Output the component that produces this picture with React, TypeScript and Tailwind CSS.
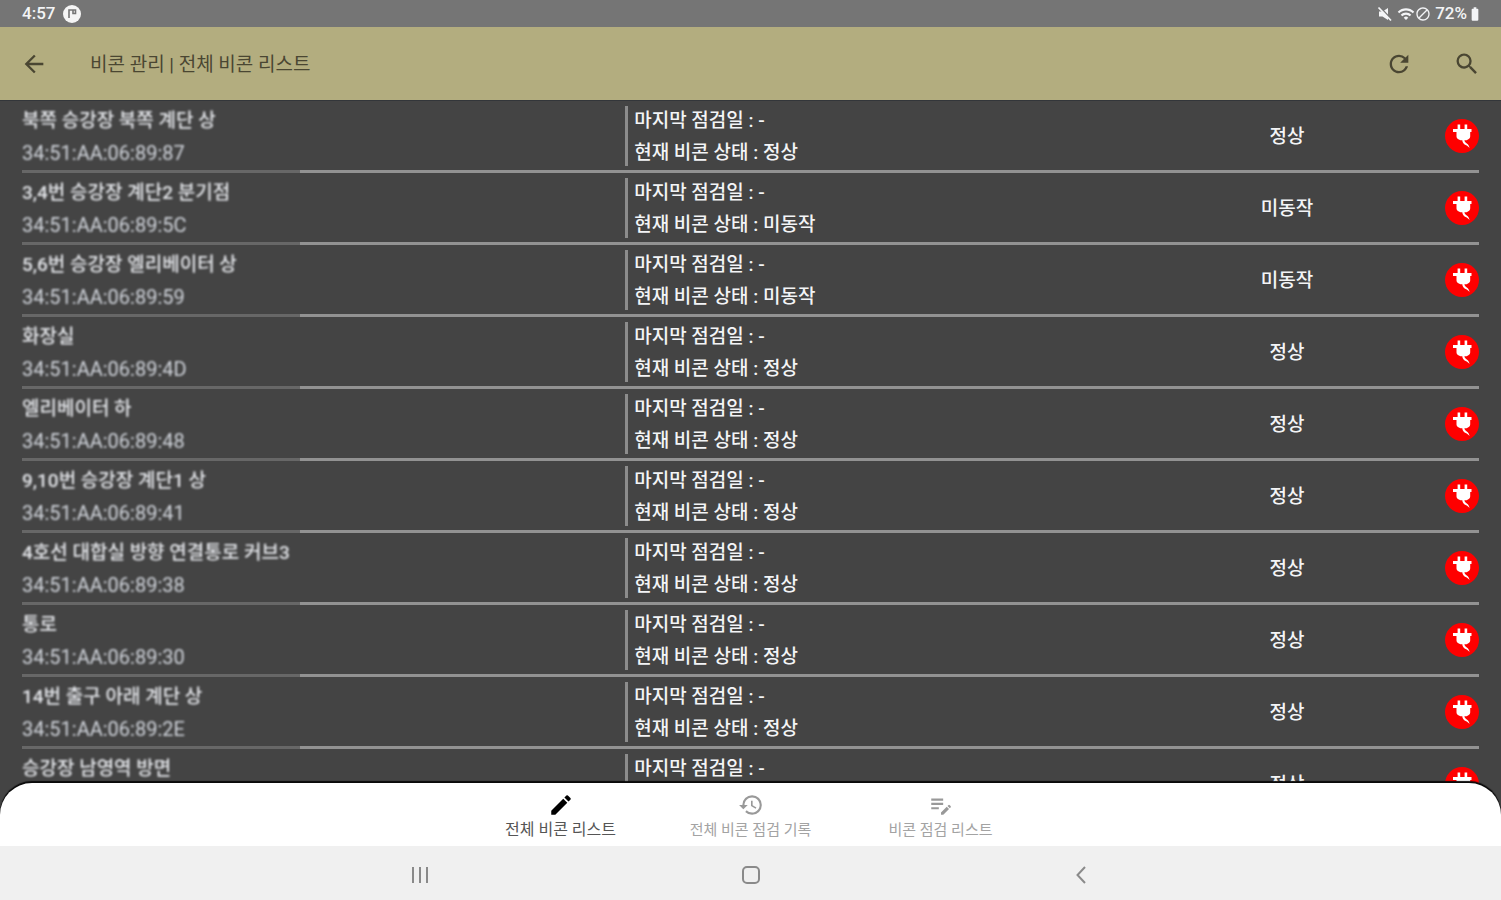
import { useState } from 'react'
import {
  MdArrowBack,
  MdBatteryFull,
  MdBlock,
  MdCreate,
  MdEditNote,
  MdHistory,
  MdRefresh,
  MdSearch,
  MdWifi,
} from 'react-icons/md'

interface Beacon {
  name: string
  mac: string
  status: string
}

const beacons: Beacon[] = [
  { name: '북쪽 승강장 북쪽 계단 상', mac: '34:51:AA:06:89:87', status: '정상' },
  { name: '3,4번 승강장 계단2 분기점', mac: '34:51:AA:06:89:5C', status: '미동작' },
  { name: '5,6번 승강장 엘리베이터 상', mac: '34:51:AA:06:89:59', status: '미동작' },
  { name: '화장실', mac: '34:51:AA:06:89:4D', status: '정상' },
  { name: '엘리베이터 하', mac: '34:51:AA:06:89:48', status: '정상' },
  { name: '9,10번 승강장 계단1 상', mac: '34:51:AA:06:89:41', status: '정상' },
  { name: '4호선 대합실 방향 연결통로 커브3', mac: '34:51:AA:06:89:38', status: '정상' },
  { name: '통로', mac: '34:51:AA:06:89:30', status: '정상' },
  { name: '14번 출구 아래 계단 상', mac: '34:51:AA:06:89:2E', status: '정상' },
  { name: '승강장 남영역 방면', mac: '34:51:AA:06:89:2B', status: '정상' },
]

const tabs = [
  { label: '전체 비콘 리스트', icon: MdCreate },
  { label: '전체 비콘 점검 기록', icon: MdHistory },
  { label: '비콘 점검 리스트', icon: MdEditNote },
]

function PlugIcon() {
  return (
    <svg viewBox="0 0 34 34" className="h-[34px] w-[34px]" aria-hidden="true">
      <circle cx="17" cy="17" r="17" fill="#fe0000" />
      <path d="M12.600 5.500h2.600V10h4.400V5.500h2.600V10h4.300v3h-1.300v4.600c0 1.800-1.600 3.200-3.600 3.600h-2.200c.2 1.400 1 2.200 2.400 3.200 1.400 1 2.300 2.300 2.700 4.600-1.200-1.400-2.300-2.200-3.900-3-2-1-3.200-2.600-3.300-4.800h-1.800c-2.400-.4-4-1.800-4-3.600V13H8v-3h4.600z" fill="#fff" />
    </svg>
  )
}

function MutedIcon() {
  return (
    <svg viewBox="0 0 16 16" className="mr-1 h-4 w-4" aria-hidden="true">
      <path d="M2 5.500h3.500L11 2v12l-5.500-3.500H2z" fill="currentColor" />
      <path d="M3 1l12 13" stroke="#757575" strokeWidth="1.500" />
      <path d="M1.500 1.500l12.500 13" stroke="currentColor" strokeWidth="1.800" />
    </svg>
  )
}

function StatusBar() {
  return (
    <div className="flex h-[27px] shrink-0 items-center justify-between bg-[#757575] px-[22px] pt-px text-[17px] font-medium text-gray-100">
      <div className="flex items-center gap-2">
        <span>4:57</span>
        <svg viewBox="0 0 18 18" className="h-[18px] w-[18px]" aria-hidden="true">
          <circle cx="9" cy="9" r="9" fill="#f5f5f5" />
          <path d="M6 13V5h3.500M10 5h2.500v3.500H10z" fill="none" stroke="#757575" strokeWidth="1.600" />
        </svg>
      </div>
      <div className="flex items-center">
        <MutedIcon />
        <MdWifi className="h-[18px] w-[18px]" />
        <MdBlock className="mr-1 h-4 w-4" />
        <span>72%</span>
        <MdBatteryFull className="-mr-1 h-4 w-4" />
      </div>
    </div>
  )
}

function Header() {
  return (
    <header className="flex h-[74px] shrink-0 items-center border-b border-[#33363a] bg-[#b3ad7f] px-[22px] text-[#4a4632]">
      <button type="button" aria-label="뒤로">
        <MdArrowBack className="-ml-0.5 h-7 w-7" />
      </button>
      <h1 className="ml-[42px] flex-1 pt-[3px] text-[19px]">비콘 관리 | 전체 비콘 리스트</h1>
      <div className="flex items-center gap-10">
        <button type="button" aria-label="새로고침">
          <MdRefresh className="h-7 w-7" />
        </button>
        <button type="button" aria-label="검색">
          <MdSearch className="-mr-0.5 h-7 w-7" />
        </button>
      </div>
    </header>
  )
}

function BeaconRow({ beacon }: { beacon: Beacon }) {
  return (
    <li>
      <div className="flex h-[69px] items-center text-[19px] leading-8">
        {/* name and address are masked */}
        <div className="w-[41.4%] pt-[2px] text-gray-200 blur-[1px]">
          <p className="font-medium">{beacon.name}</p>
          <p className="text-[20px] text-gray-300">{beacon.mac}</p>
        </div>
        <div className="h-[60px] w-[3px] bg-[#8c8c8c]" />
        <div className="flex-1 pt-[2px] pl-[6px] font-medium text-gray-100">
          <p>마지막 점검일 : -</p>
          <p>현재 비콘 상태 : {beacon.status}</p>
        </div>
        <div className="w-48 pt-[2px] text-center font-medium text-gray-100">{beacon.status}</div>
        <div className="flex w-24 justify-end">
          <PlugIcon />
        </div>
      </div>
      <div className="flex h-[3px]">
        <div className="w-[278px] bg-[#676767]" />
        <div className="flex-1 bg-[#929292]" />
      </div>
    </li>
  )
}

function TabBar() {
  const [active, setActive] = useState(0)

  return (
    <nav className="z-10 shrink-0 rounded-t-[32px] bg-white shadow-[0_-2px_1px_#0a0a0a]">
      <div className="mx-auto grid h-[63px] max-w-[570px] grid-cols-3">
        {tabs.map(({ label, icon: Icon }, index) => (
          <button
            key={label}
            type="button"
            onClick={() => setActive(index)}
            className={
              index === active
                ? 'flex flex-col items-center pt-[9px] text-[16px] leading-6 whitespace-nowrap text-[#555]'
                : 'flex flex-col items-center pt-[9px] text-[15px] leading-6 whitespace-nowrap text-[#a3a3a3]'
            }
          >
            <Icon className={index === active ? 'h-[26px] w-[26px] shrink-0 text-black' : 'h-[26px] w-[26px] shrink-0 text-[#999]'} />
            {label}
          </button>
        ))}
      </div>
    </nav>
  )
}

function SystemBar() {
  return (
    <div className="z-10 h-[54px] shrink-0 bg-[#f0f0f0] pt-[3px] text-[#8a8a8a]">
      <div className="mx-auto grid h-full w-[66%] grid-cols-3 place-items-center">
        <button type="button" aria-label="최근 앱" className="flex gap-[5px]">
          <span className="h-4 w-[2px] bg-current" />
          <span className="h-4 w-[2px] bg-current" />
          <span className="h-4 w-[2px] bg-current" />
        </button>
        <button type="button" aria-label="홈" className="h-[18px] w-[18px] rounded-[5px] border-2 border-current" />
        <button type="button" aria-label="뒤로 가기">
          <svg viewBox="0 0 12 20" className="h-5 w-3" fill="none" stroke="currentColor" strokeWidth="2" aria-hidden="true">
            <path d="M10 2 2.500 10 10 18" />
          </svg>
        </button>
      </div>
    </div>
  )
}

export default function App() {
  return (
    <div className="flex h-screen flex-col bg-[#444] font-[Roboto,'Noto_Sans_CJK_KR',sans-serif]">
      <StatusBar />
      <Header />
      <main className="min-h-0 flex-1 overflow-y-auto px-[22px] [scrollbar-width:none]">
        <ul>
          {beacons.map((beacon) => (
            <BeaconRow key={beacon.mac} beacon={beacon} />
          ))}
        </ul>
      </main>
      <TabBar />
      <SystemBar />
    </div>
  )
}
